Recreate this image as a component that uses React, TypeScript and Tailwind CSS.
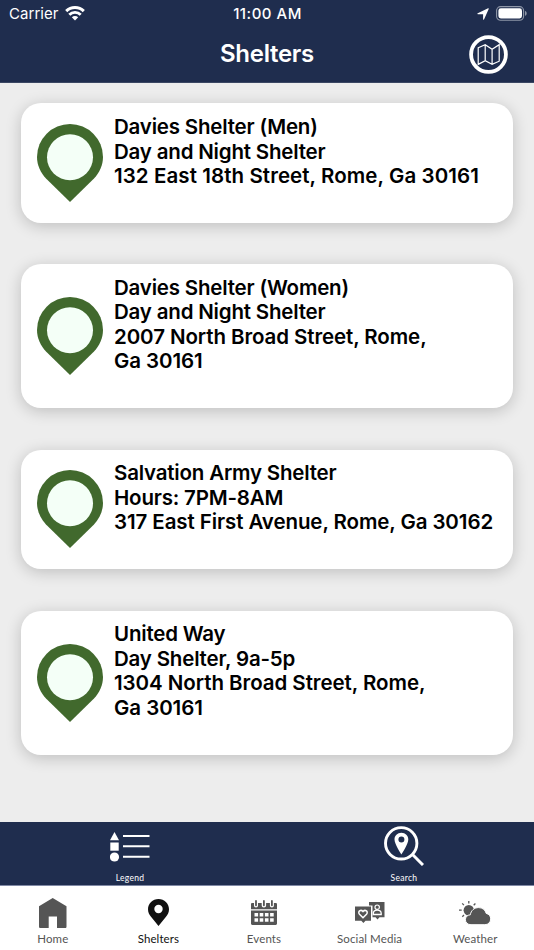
import type { ReactNode } from 'react';
import clsx from 'clsx';

type Shelter = {
  name: string;
  info: string;
  address: string[];
  tracking?: string;
};

const shelters: Shelter[] = [
  {
    name: 'Davies Shelter (Men)',
    info: 'Day and Night Shelter',
    address: ['132 East 18th Street, Rome, Ga 30161'],
    tracking: 'tracking-[0.08px]',
  },
  {
    name: 'Davies Shelter (Women)',
    info: 'Day and Night Shelter',
    address: ['2007 North Broad Street, Rome,', 'Ga 30161'],
  },
  {
    name: 'Salvation Army Shelter',
    info: 'Hours: 7PM-8AM',
    address: ['317 East First Avenue, Rome, Ga 30162'],
  },
  {
    name: 'United Way',
    info: 'Day Shelter, 9a-5p',
    address: ['1304 North Broad Street, Rome,', 'Ga 30161'],
    tracking: 'tracking-[-0.05px]',
  },
];

function StatusBar() {
  return (
    <div className="grid h-[27px] grid-cols-3 items-center pl-[9px] pr-[7px] text-[15px] leading-none">
      <div className="flex items-center gap-[6px]">
        <span className="tracking-[0.05px]">Carrier</span>
        <svg className="h-[15px] w-5" viewBox="0 0 20 15" fill="none" stroke="#fff">
          <path d="M1.2 5.1a12.6 12.6 0 0 1 17.6 0" strokeWidth="3" />
          <path d="M4.3 8.7a8.1 8.1 0 0 1 11.4 0" strokeWidth="2.9" />
          <path d="M10 14.6 6.8 11.3a4.5 4.5 0 0 1 6.4 0Z" fill="#fff" stroke="none" />
        </svg>
      </div>
      <span className="-ml-px text-center text-[15px] font-[550] tracking-[0.5px] whitespace-nowrap">11:00 AM</span>
      <div className="flex items-center justify-end gap-[7px]">
        <svg className="h-3 w-3" viewBox="0 0 12 12" fill="#fff">
          <path d="M11.1.3c.5-.2.8.1.6.6L7 11.4c-.3.6-.9.5-.9-.1V6.2H.9c-.7 0-.8-.6-.1-.9Z" />
        </svg>
        <svg className="h-[15px] w-[31px]" viewBox="0 0 31 15" fill="none">
          <rect x=".6" y=".6" width="27" height="13.6" rx="4" stroke="#8f97a8" strokeWidth="1.1" />
          <rect x="2.4" y="2.3" width="23.6" height="10.2" rx="2.4" fill="#fff" />
          <path d="M29 5v4.8c1-.3 1.7-1.2 1.7-2.4S30 5.3 29 5Z" fill="#8f97a8" />
        </svg>
      </div>
    </div>
  );
}

function Header() {
  return (
    <header className="h-[83px] shrink-0 border-b border-[#3b4763] bg-[#1f2d4e] text-white">
      <StatusBar />
      <div className="grid h-[54px] grid-cols-[1fr_auto_1fr] items-center">
        <h1 className="col-start-2 text-[24px] font-semibold tracking-[-0.3px]">Shelters</h1>
        <button className="mr-[26px] justify-self-end" aria-label="Map">
          <svg className="size-[39px]" viewBox="0 0 39 39" fill="none" stroke="#fff">
            <circle cx="19.5" cy="19.5" r="17.4" strokeWidth="3.8" />
            <path
              d="M9.2 12.8 16.2 9.7 23.1 14.2 30.2 9.7V26.2L23.1 29.4 16.2 25.8 9.2 29.4ZM16.2 9.7V25.8M23.1 14.2V29.4"
              strokeWidth="1.2"
            />
          </svg>
        </button>
      </div>
    </header>
  );
}

function ShelterCard({ name, info, address, tracking = 'tracking-[-0.09px]' }: Shelter) {
  return (
    <li className="flex items-center rounded-[20px] bg-white pl-4 shadow-[0_3px_16px_rgba(0,0,0,0.2)]">
      <svg className="h-[78px] w-[66px] shrink-0" viewBox="0 0 66 78">
        <path d="M33 0A33 33 0 0 0 0 33C0 41 3.5 48.5 9 54.5L33 78 57 54.5C62.5 48.5 66 41 66 33A33 33 0 0 0 33 0Z" fill="#41692d" />
        <circle cx="33" cy="33.3" r="23" fill="#f4fff7" />
      </svg>
      <div className="self-start pt-[11.7px] pb-[34.3px] pl-[11px] text-[20.5px] leading-[24.5px] font-[560] tracking-[-0.19px] whitespace-nowrap text-black">
        <p>{name}</p>
        <p>{info}</p>
        {address.map(line => (
          <p key={line} className={tracking}>{line}</p>
        ))}
      </div>
    </li>
  );
}

function Toolbar() {
  return (
    <div className="grid h-16 shrink-0 grid-cols-2 border-b border-[#8089a5] bg-[#1f2d4e] px-px font-[Lato,sans-serif] text-[8.5px] leading-none tracking-[0.3px] text-white">
      <button className="mr-2 flex flex-col items-center pt-[9px]">
        <svg className="h-8 w-10" viewBox="0 0 40 32" fill="#fff">
          <path d="M4.5 1 9 9.3H0Z" />
          <rect x=".3" y="11.5" width="8.4" height="8.2" />
          <circle cx="4.5" cy="26" r="4.6" />
          <path d="M13 5H39.5M13 15.3H39.5M13 25.8H39.5" stroke="#fff" strokeWidth="2" />
        </svg>
        <span className="mt-[11px]">Legend</span>
      </button>
      <button className="ml-2 flex flex-col items-center pt-[4px]">
        <svg className="h-10 w-10" viewBox="0 0 40 40" fill="none">
          <circle cx="17.2" cy="17.3" r="15.7" stroke="#fff" strokeWidth="2.9" />
          <path d="m28.5 28.5 10.5 10.5" stroke="#fff" strokeWidth="3" />
          <path
            fillRule="evenodd"
            d="M17.4 6.7c-4 0-6.9 3-6.9 6.7 0 4.6 6.9 15 6.9 15s6.9-10.4 6.9-15c0-3.7-2.9-6.7-6.9-6.7Zm0 3.8a3 3 0 1 1 0 6 3 3 0 0 1 0-6Z"
            fill="#fff"
          />
        </svg>
        <span className="mt-[8px]">Search</span>
      </button>
    </div>
  );
}

function HomeIcon() {
  return (
    <svg className="h-[30px] w-7" viewBox="0 0 28 30" fill="currentColor">
      <path d="M13.7 0 27.5 8.2V28.5c0 1-.5 1.5-1.3 1.5H18V18.5H9.7V30H1.5C.6 30 0 29.5 0 28.5V8.2Z" />
    </svg>
  );
}

function PinIcon() {
  return (
    <svg className="h-[27px] w-[21px]" viewBox="0 0 21 27" fill="currentColor">
      <path
        fillRule="evenodd"
        d="M10.5 0C4.7 0 0 4.6 0 10.3c0 3.3 1.3 5.2 3.2 7.8L10.5 27l7.3-8.9C19.7 15.5 21 13.6 21 10.3 21 4.6 16.3 0 10.5 0Zm0 5.8a4.2 4.2 0 1 1 0 8.4 4.2 4.2 0 0 1 0-8.4Z"
      />
    </svg>
  );
}

function CalendarIcon() {
  return (
    <svg className="h-[25px] w-[26px]" viewBox="0 0 26 25" fill="currentColor">
      <path d="M1.2 3H3v2.5c0 1.2.8 2 2 2s2-.8 2-2V3h3.7v2.5c0 1.2.9 2 2.2 2s2.2-.8 2.2-2V3h3.8v2.5c0 1.2.8 2 2 2s2-.8 2-2V3h1.8c.7 0 1.3.5 1.3 1.2v5H0v-5C0 3.5.5 3 1.2 3Z" />
      <rect x="4.1" width="1.8" height="6.2" rx=".9" />
      <rect x="12" width="1.8" height="6.2" rx=".9" />
      <rect x="20" width="1.8" height="6.2" rx=".9" />
      <path
        fillRule="evenodd"
        d="M0 10.5h26V23.6c0 .8-.5 1.4-1.3 1.4H1.3C.5 25 0 24.4 0 23.6ZM3.5 13v3.6h3.6V13Zm5.2 0v3.6h3.6V13Zm5.2 0v3.6h3.6V13Zm5.2 0v3.6h3.6V13ZM3.5 18.2v3.6h3.6v-3.6Zm5.2 0v3.6h3.6v-3.6Zm5.2 0v3.6h3.6v-3.6Zm5.2 0v3.6h3.6v-3.6Z"
      />
    </svg>
  );
}

function SocialIcon() {
  return (
    <svg className="h-[21px] w-[30px]" viewBox="0 0 30 21" fill="none">
      <path d="M14 0H29.5V15.3H24.5L22.5 17.5 20.5 15.3H17.5V3.6H14Z" fill="currentColor" />
      <circle cx="22.2" cy="5.2" r="2.2" stroke="#fff" strokeWidth="1.2" />
      <path d="M18.3 12.5V11.5c0-2 1.5-3.3 3.9-3.3s4 1.3 4 3.3v1Z" stroke="#fff" strokeWidth="1.3" />
      <path d="M0 4.5H16V18.8H10.5L8.4 21 6.3 18.8H0Z" fill="currentColor" />
      <path
        d="M8 15.7 4.5 12.2c-2.2-2.5 1.2-5.3 3.5-2.7 2.3-2.6 5.7.2 3.5 2.7Z"
        stroke="#fff"
        strokeWidth="1.5"
      />
    </svg>
  );
}

function WeatherIcon() {
  return (
    <svg className="h-6 w-8" viewBox="0 0 32 24" fill="none">
      <circle cx="9.8" cy="9.2" r="5.2" fill="currentColor" />
      <path
        d="M9.8 0v2.4M3.2 2.4l1.7 1.7M0 9.2h2.7M3.3 15.7 5 14M14.7 4.2l1.7-1.7"
        stroke="currentColor"
        strokeWidth="1.3"
      />
      <path
        d="M12 23.7c-3.4 0-5.6-2.2-5.6-5 0-2.7 2-4.8 4.9-4.9C12 9.5 15.3 6.6 19.6 6.6c3.9 0 6.7 2.3 7.6 5.8 2.8.6 4.5 2.8 4.5 5.5 0 3.3-2.4 5.8-5.8 5.8Z"
        fill="currentColor"
        stroke="#fff"
        strokeWidth="1"
      />
    </svg>
  );
}

const tabs: { label: string; icon: ReactNode }[] = [
  { label: 'Home', icon: <HomeIcon /> },
  { label: 'Shelters', icon: <PinIcon /> },
  { label: 'Events', icon: <CalendarIcon /> },
  { label: 'Social Media', icon: <SocialIcon /> },
  { label: 'Weather', icon: <WeatherIcon /> },
];

function TabBar({ active }: { active: string }) {
  return (
    <nav className="grid h-16 shrink-0 grid-cols-5 bg-white pr-[6px] font-[Lato,sans-serif]">
      {tabs.map(({ label, icon }) => (
        <button
          key={label}
          className={clsx('flex flex-col items-center', label === active ? 'text-[#111]' : 'text-[#555]')}
        >
          <span className="flex h-[53px] items-center">{icon}</span>
          <span className="-mt-[6px] text-[11.5px] leading-[12px] tracking-[0.1px] whitespace-nowrap">{label}</span>
        </button>
      ))}
    </nav>
  );
}

export default function App() {
  return (
    <div className="flex h-[950px] w-[534px] flex-col overflow-hidden bg-[#ededed] font-[Inter,sans-serif]">
      <Header />
      <main className="flex-1 px-[21px] pt-[20.4px]">
        <ul className="flex flex-col gap-[41.4px]">
          {shelters.map(shelter => (
            <ShelterCard key={shelter.name} {...shelter} />
          ))}
        </ul>
      </main>
      <Toolbar />
      <TabBar active="Shelters" />
    </div>
  );
}
